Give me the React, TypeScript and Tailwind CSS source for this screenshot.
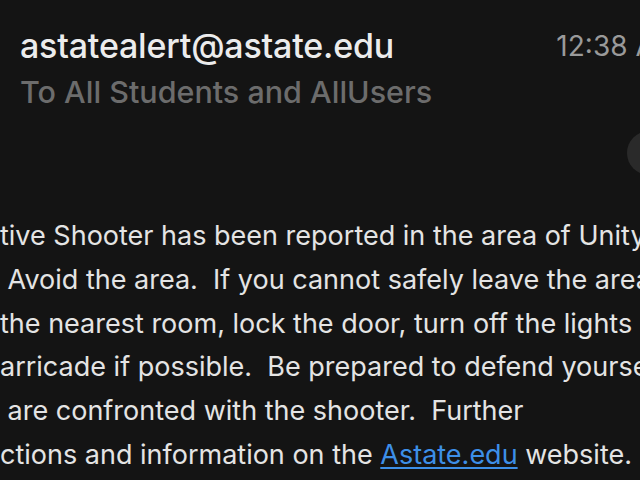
import React from 'react'

const lines = [
  'tive Shooter has been reported in the area of Unity',
  ' Avoid the area.  If you cannot safely leave the area',
  'the nearest room, lock the door, turn off the lights',
  'arricade if possible.  Be prepared to defend yourself',
  ' are confronted with the shooter.  Further',
]

export default function App() {
  return (
    <div
      className="relative w-[640px] h-[480px] overflow-hidden bg-[#141414] text-[#e6e6e6]"
      style={{ fontFamily: 'Inter, "Open Sans", sans-serif' }}
    >
      {/* header */}
      <div className="flex items-start pl-5 pt-[26px]">
        <div className="flex-1 min-w-0">
          <div className="text-[34px] leading-[40px] font-medium tracking-[-0.2px] text-[#ececec] whitespace-nowrap">
            astatealert@astate.edu
          </div>
          <div className="mt-[6px] text-[30.5px] leading-[40px] font-medium text-[#6c6c6c] whitespace-nowrap">
            To All Students and AllUsers
          </div>
        </div>
        <div className="shrink-0 mr-[-40px] text-[28px] leading-[40px] text-[#9a9a9a] whitespace-nowrap">
          12:38 AM
        </div>
      </div>

      {/* round button peeking from the right */}
      <div className="absolute left-[627px] top-[131px] w-11 h-11 rounded-full bg-[#2a2a2a]" />

      {/* message body */}
      <div className="mt-[102px] text-[27px] leading-[43.8px] text-[#e4e4e4]">
        {lines.map((l, i) => (
          <div key={i} className="whitespace-pre">
            {l}
          </div>
        ))}
        <div className="whitespace-pre">
          ctions and information on the{' '}
          <span className="text-[#3d8fe8] underline underline-offset-[3px]">Astate.edu</span> website.
        </div>
      </div>
    </div>
  )
}
